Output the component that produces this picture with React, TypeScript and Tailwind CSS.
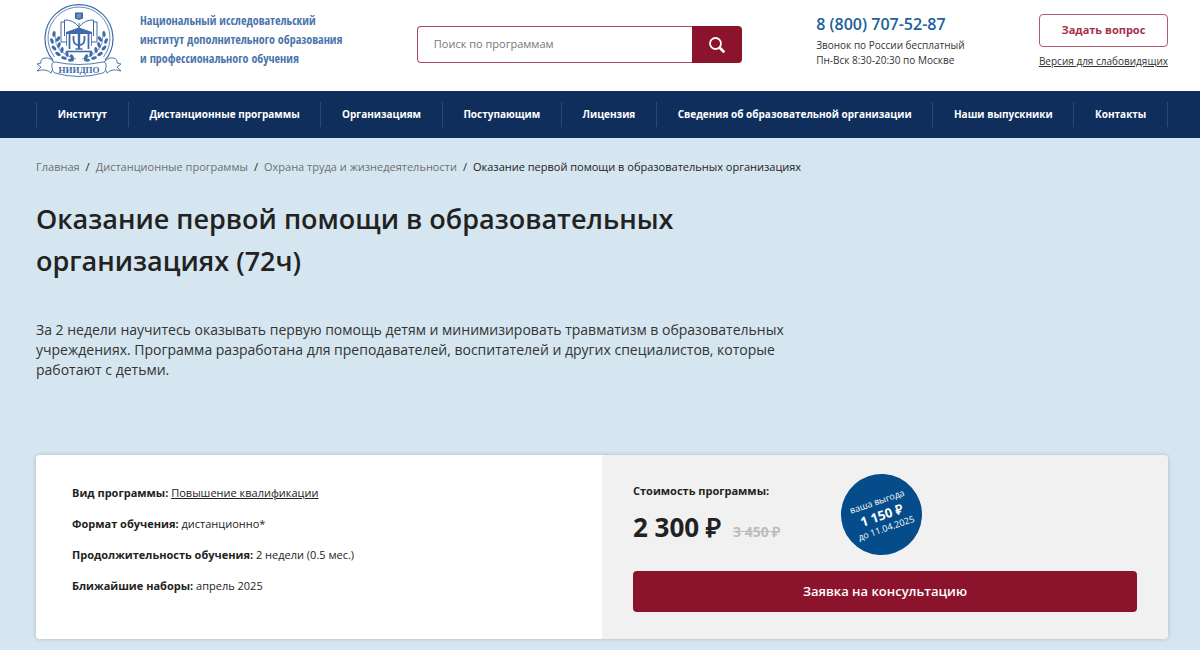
import React from "react";

const menu = [
  "Институт",
  "Дистанционные программы",
  "Организациям",
  "Поступающим",
  "Лицензия",
  "Сведения об образовательной организации",
  "Наши выпускники",
  "Контакты",
];

const crumbs = ["Главная", "Дистанционные программы", "Охрана труда и жизнедеятельности"];

const details = [
  { label: "Вид программы:", value: "Повышение квалификации", link: true },
  { label: "Формат обучения:", value: "дистанционно*" },
  { label: "Продолжительность обучения:", value: "2 недели (0.5 мес.)" },
  { label: "Ближайшие наборы:", value: "апрель 2025" },
];

// laurel leaves of the left branch: x, y, rotation
const leaves = [
  [18, 30, 5],
  [22, 35, 35],
  [16, 37, -25],
  [23, 41, 20],
  [18, 44, -40],
  [26, 46, 5],
  [22, 50, -60],
  [31, 50, -10],
  [28, 54, -75],
  [36, 53, -25],
  [35, 56, -95],
];

function Branch() {
  return (
    <g>
      <path d="M19 31Q18 49 40 55" fill="none" strokeWidth="0.7" />
      {leaves.map(([x, y, r]) => (
        <ellipse key={`${x}-${y}`} cx={x} cy={y} rx="1.6" ry="3" stroke="none" transform={`rotate(${r} ${x} ${y})`} />
      ))}
    </g>
  );
}

function Logo() {
  return (
    <svg width="86" height="74" viewBox="0 0 86 74" fill="#3f6ca6" stroke="#3f6ca6" aria-hidden="true">
      <g fill="none">
        <path d="M17 56.5A34 34 0 1 1 69 56.5" strokeWidth="1.2" />
        <path d="M18.5 53A31 31 0 1 1 67.5 53" strokeWidth="0.8" />
      </g>
      <path d="M39 8.5H47V14.5L43 16L39 14.5Z" stroke="none" />
      <path d="M41 11H45M41 13H45" stroke="#fff" strokeWidth="0.5" />
      <g fill="none" strokeWidth="1">
        <path d="M43 23Q37 15.5 28.5 16V32M43 23Q49 15.5 57.5 16V32" />
        <path d="M28.5 18H25V38H31M57.5 18H61V38H55" />
        <path d="M43 19V24" />
      </g>
      <path d="M30 28L43 23.5L56 28V30H30Z" stroke="none" />
      <path d="M33.5 30V45M52.5 30V45" strokeWidth="1.8" />
      <path d="M30.5 30V42M55.5 30V42" strokeWidth="0.8" />
      <path d="M43 30V45" strokeWidth="2.4" />
      <path d="M37.5 32V36Q38 41 43 41Q48 41 48.5 36V32" fill="none" strokeWidth="1.8" />
      <path d="M39.5 45H46.5" strokeWidth="1.4" />
      <path d="M30 47.5H56" strokeWidth="1.6" />
      <Branch />
      <g transform="translate(86 0) scale(-1 1)">
        <Branch />
      </g>
      <g fill="#fff" strokeWidth="0.9">
        <path d="M19 60Q15 53 9 54Q4 55 5 59L1 60L5 63L1 67Q10 64 15 69Z" />
        <path d="M67 60Q71 53 77 54Q82 55 81 59L85 60L81 63L85 67Q76 64 71 69Z" />
        <path d="M19 58Q43 63 67 58Q71 58 70 63Q70 68 67 69Q43 76 19 69Q16 68 16 63Q15 58 19 58Z" />
      </g>
      <text x="43" y="69" textAnchor="middle" stroke="none" className="font-['Liberation_Serif',serif] text-[9px] font-bold">
        НИИДПО
      </text>
    </svg>
  );
}

function Header() {
  return (
    <header className="flex h-[91px] items-start justify-between pl-9 pr-8">
      <a href="#" className="flex gap-[18px] pt-1">
        <Logo />
        <span className="pt-[7px] font-['Open_Sans_Condensed','Liberation_Sans_Narrow',sans-serif] text-[12px] leading-[19px] font-bold whitespace-nowrap text-[#4a74ab]">
          Национальный исследовательский
          <br />
          институт дополнительного образования
          <br />и профессионального обучения
        </span>
      </a>
      <form className="mt-[26px] flex h-[37px] w-[325px]">
        <input
          type="search"
          aria-label="Поиск по программам"
          placeholder="Поиск по программам"
          className="min-w-0 flex-1 rounded-l border border-r-0 border-[#a84a60] px-4 text-[11px] outline-none placeholder:text-[#777]"
        />
        <button type="submit" aria-label="Найти" className="flex w-[50px] items-center justify-center rounded-r bg-[#8b132c]">
          <svg width="18" height="18" viewBox="0 0 18 18" fill="none" stroke="#fff">
            <circle cx="7.5" cy="7.5" r="5.5" strokeWidth="1.8" />
            <path d="M12 12L15.5 15.5" strokeWidth="2.8" strokeLinecap="round" />
          </svg>
        </button>
      </form>
      <div className="pt-3 text-[10px] leading-[15px] text-[#333]">
        <a href="tel:88007075287" className="block pb-[2px] text-[16px] leading-[24px] font-semibold text-[#1b609c]">
          8 (800) 707-52-87
        </a>
        <p>Звонок по России бесплатный</p>
        <p>Пн-Вск 8:30-20:30 по Москве</p>
      </div>
      <div className="flex flex-col items-end pt-[14px]">
        <button type="button" className="h-[33px] w-full rounded border border-[#b05a6d] text-[11px] font-bold text-[#a3304a]">
          Задать вопрос
        </button>
        <a href="#" className="mt-[7px] text-[10px] leading-[15px] text-[#333] underline">
          Версия для слабовидящих
        </a>
      </div>
    </header>
  );
}

export default function App() {
  return (
    <div className="min-h-screen bg-[#d6e6f0] font-['Open_Sans',sans-serif] text-[#222]">
      <div className="bg-white">
        <Header />
      </div>
      <nav className="bg-[#0f2e5b] pl-9 pr-8 py-[11px]">
        <ul className="flex border-l border-[#2b4870]">
          {menu.map((item) => (
            <li key={item} className="flex-auto border-r border-[#2b4870] text-center text-[10px] leading-[25px] font-bold whitespace-nowrap text-white">
              <a href="#">{item}</a>
            </li>
          ))}
        </ul>
      </nav>
      <main className="pl-9 pr-8 pt-5 pb-3">
        <div className="flex gap-[6px] text-[11px] leading-[18px] whitespace-nowrap text-[#222]">
          {crumbs.map((item) => (
            <React.Fragment key={item}>
              <a href="#" className="text-[#6c7072]">
                {item}
              </a>
              <span>/</span>
            </React.Fragment>
          ))}
          <span>Оказание первой помощи в образовательных организациях</span>
        </div>
        <h1 className="mt-[22px] max-w-[760px] text-[27px] leading-[42px] font-semibold">
          Оказание первой помощи в образовательных организациях (72ч)
        </h1>
        <p className="mt-[38px] max-w-[790px] text-[14px] leading-[20px] text-[#333]">
          За 2 недели научитесь оказывать первую помощь детям и минимизировать травматизм в образовательных учреждениях.
          Программа разработана для преподавателей, воспитателей и других специалистов, которые работают с детьми.
        </p>
        <section className="mt-[75px] grid grid-cols-2 overflow-hidden rounded shadow-[0_0_4px_rgba(0,0,0,0.2)]">
          <div className="bg-white px-9 py-7">
            {details.map((item) => (
              <p key={item.label} className="mb-[11px] text-[11px] leading-[20px] last:mb-0">
                <b>{item.label}</b>{" "}
                {item.link ? (
                  <a href="#" className="underline">
                    {item.value}
                  </a>
                ) : (
                  item.value
                )}
              </p>
            ))}
          </div>
          <div className="relative bg-[#f1f1f1] px-[31px] pt-[26px] pb-[27px]">
            <p className="text-[11px] leading-[20px] font-bold">Стоимость программы:</p>
            <div className="mt-[5px] flex items-baseline gap-3 leading-[42px] font-bold">
              <span className="text-[26px]">2 300 ₽</span>
              <s className="text-[14px] text-[#bdbdbd]">3 450 ₽</s>
            </div>
            <button type="button" className="mt-[18px] h-[41px] w-full rounded bg-[#8b132c] text-[13px] font-semibold text-white">
              Заявка на консультацию
            </button>
            <div className="absolute top-[19px] left-[239px] flex size-[81px] -rotate-[19deg] flex-col items-center justify-center rounded-full bg-[#044d8a] text-[9px] leading-[14px] text-white">
              <span>ваша выгода</span>
              <b className="text-[13px]">1 150 ₽</b>
              <span>до 11.04.2025</span>
            </div>
          </div>
        </section>
      </main>
    </div>
  );
}
